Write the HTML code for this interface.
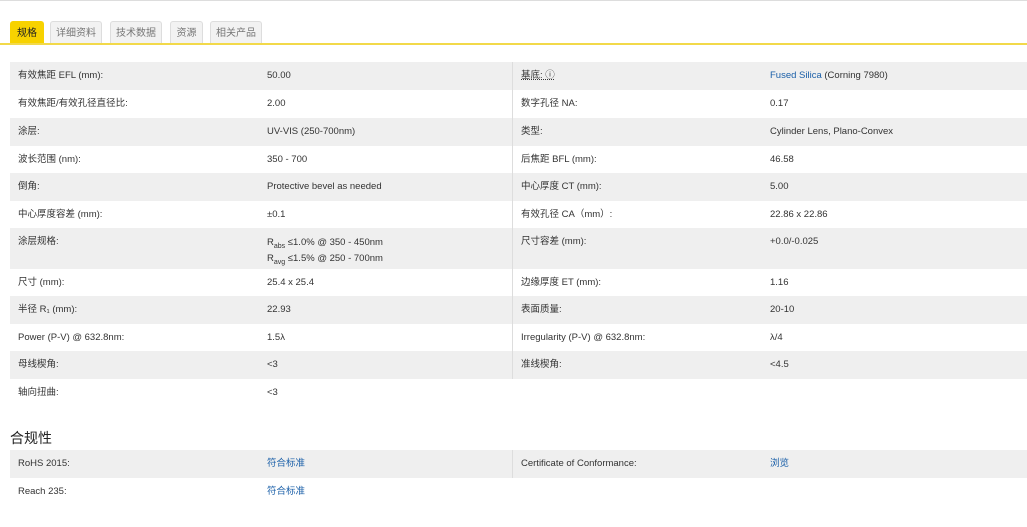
<!DOCTYPE html><html><head><meta charset="utf-8"><style>
*{margin:0;padding:0;box-sizing:border-box}
body{width:1027px;height:527px;background:#fff;font-family:"Liberation Sans","Noto Sans CJK SC",sans-serif;font-size:9.5px;color:#333;position:relative;overflow:hidden;border-top:1px solid #ddd}
.tabs{position:absolute;left:10px;top:20px;height:23px}
.tab{position:absolute;top:0;height:23px;line-height:23px;font-size:10px;text-align:center;color:#777;background:#f2f2f2;border:1px solid #ddd;border-bottom:none;border-radius:3px 3px 0 0}
.tab.a{background:#f7d200;border-color:#f7d200;color:#222}
.line{position:absolute;left:0;top:42px;width:1027px;height:2px;background:#f2d94a}
.row{position:absolute;left:10px;width:1017px;height:28px}
.g{background:#efefef}
.c{position:absolute;top:0;line-height:28px;white-space:nowrap}
.l1{left:8px}.v1{left:257px}.l2{left:511px}.v2{left:760px}
.div{position:absolute;left:512px;width:1px;background:#ddd}
a{color:#1a5fa8;text-decoration:none}
h3{position:absolute;left:10px;top:427px;font-size:14px;font-weight:normal;color:#222}
sub{font-size:7px}
</style></head><body>
<div class="tabs">
<div class="tab a" style="left:0;width:34px">规格</div>
<div class="tab" style="left:40px;width:52px">详细资料</div>
<div class="tab" style="left:100px;width:52px">技术数据</div>
<div class="tab" style="left:160px;width:33px">资源</div>
<div class="tab" style="left:200px;width:52px">相关产品</div>
</div>
<div class="line"></div>
<div class="row g" style="top:61px"><span class="c l1">有效焦距 EFL (mm):</span><span class="c v1">50.00</span><span class="c l2" style="text-decoration:underline dotted">基底: ⓘ</span><span class="c v2"><a>Fused Silica</a> (Corning 7980)</span></div>
<div class="row" style="top:89px"><span class="c l1">有效焦距/有效孔径直径比:</span><span class="c v1">2.00</span><span class="c l2">数字孔径 NA:</span><span class="c v2">0.17</span></div>
<div class="row g" style="top:117px"><span class="c l1">涂层:</span><span class="c v1">UV-VIS (250-700nm)</span><span class="c l2">类型:</span><span class="c v2">Cylinder Lens, Plano-Convex</span></div>
<div class="row" style="top:145px"><span class="c l1">波长范围 (nm):</span><span class="c v1">350 - 700</span><span class="c l2">后焦距 BFL (mm):</span><span class="c v2">46.58</span></div>
<div class="row g" style="top:172px"><span class="c l1">倒角:</span><span class="c v1">Protective bevel as needed</span><span class="c l2">中心厚度 CT (mm):</span><span class="c v2">5.00</span></div>
<div class="row" style="top:200px"><span class="c l1">中心厚度容差 (mm):</span><span class="c v1">±0.1</span><span class="c l2">有效孔径 CA（mm）:</span><span class="c v2">22.86 x 22.86</span></div>
<div class="row g" style="top:227px;height:41px"><span class="c l1">涂层规格:</span><span class="c v1" style="line-height:12px;top:9px">R<sub>abs</sub> ≤1.0% @ 350 - 450nm<br>R<sub>avg</sub> ≤1.5% @ 250 - 700nm</span><span class="c l2">尺寸容差 (mm):</span><span class="c v2">+0.0/-0.025</span></div>
<div class="row" style="top:268px"><span class="c l1">尺寸 (mm):</span><span class="c v1">25.4 x 25.4</span><span class="c l2">边缘厚度 ET (mm):</span><span class="c v2">1.16</span></div>
<div class="row g" style="top:295px"><span class="c l1">半径 R₁ (mm):</span><span class="c v1">22.93</span><span class="c l2">表面质量:</span><span class="c v2">20-10</span></div>
<div class="row" style="top:323px"><span class="c l1">Power (P-V) @ 632.8nm:</span><span class="c v1">1.5λ</span><span class="c l2">Irregularity (P-V) @ 632.8nm:</span><span class="c v2">λ/4</span></div>
<div class="row g" style="top:350px"><span class="c l1">母线楔角:</span><span class="c v1">&lt;3</span><span class="c l2">准线楔角:</span><span class="c v2">&lt;4.5</span></div>
<div class="row" style="top:378px"><span class="c l1">轴向扭曲:</span><span class="c v1">&lt;3</span></div>
<div class="div" style="top:61px;height:317px"></div>
<h3>合规性</h3>
<div class="row g" style="top:449px"><span class="c l1">RoHS 2015:</span><span class="c v1"><a>符合标准</a></span><span class="c l2">Certificate of Conformance:</span><span class="c v2"><a>浏览</a></span></div>
<div class="row" style="top:477px"><span class="c l1">Reach 235:</span><span class="c v1"><a>符合标准</a></span></div>
<div class="div" style="top:449px;height:28px"></div>
</body></html>
